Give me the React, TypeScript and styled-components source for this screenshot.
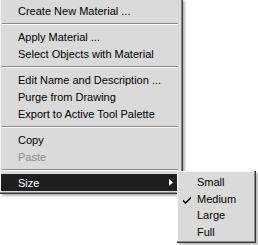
import React from "react";
import styled, { createGlobalStyle } from "styled-components";

const Global = createGlobalStyle`
  html, body { margin: 0; padding: 0; background: #ffffff; }
  body { font-family: "Liberation Sans", Arial, sans-serif; font-size: 11px; }
`;

const Stage = styled.div`
  position: relative;
  width: 258px;
  height: 245px;
  overflow: hidden;
`;

const Menu = styled.div`
  display: flex;
  flex-direction: column;
  width: 183px;
  box-sizing: border-box;
  margin-top: -1px;
  padding: 3px 3px 2px 1px;
  background: #dadada;
  border-right: 1px solid #383838;
  border-bottom: 1px solid #383838;
  box-shadow: inset -1px -1px 0 #8a8a8a, inset 1px 1px 0 #f4f4f4,
    2px 2px 2px rgba(0, 0, 0, 0.28);
`;

const Item = styled.div<{ $disabled?: boolean; $active?: boolean }>`
  position: relative;
  display: flex;
  align-items: center;
  height: 17px;
  padding-left: 17px;
  color: ${(p) => (p.$disabled ? "#8c8c8c" : p.$active ? "#ffffff" : "#000000")};
  background: ${(p) => (p.$active ? "#1e1e1e" : "transparent")};
  white-space: nowrap;
`;

const Separator = styled.div`
  height: 9px;
  display: flex;
  align-items: center;
  padding: 0 1px;
  &::before {
    content: "";
    flex: 1;
    height: 1px;
    border-bottom: 1px solid #fafafa;
    background: #8a8a8a;
  }
`;

const Arrow = styled.svg`
  position: absolute;
  right: 6px;
  top: 5px;
`;

const SubMenu = styled.div`
  position: absolute;
  left: 177px;
  top: 171px;
  width: 79px;
  box-sizing: border-box;
  padding: 3px 2px 2px 2px;
  display: flex;
  flex-direction: column;
  background: #dadada;
  border-right: 1px solid #383838;
  border-bottom: 1px solid #383838;
  box-shadow: inset -1px -1px 0 #8a8a8a, inset 1px 1px 0 #f8f8f8,
    2px 2px 2px rgba(0, 0, 0, 0.28);
`;

const SubItem = styled.div`
  position: relative;
  height: 16.5px;
  display: flex;
  align-items: center;
  padding-left: 18px;
  color: #000;
`;

const Check = styled.svg`
  position: absolute;
  left: 4px;
  top: 5px;
`;

export default function App() {
  return (
    <Stage>
      <Global />
      <Menu>
        <Item>Create New Material ...</Item>
        <Separator />
        <Item>Apply Material ...</Item>
        <Item>Select Objects with Material</Item>
        <Separator />
        <Item>Edit Name and Description ...</Item>
        <Item>Purge from Drawing</Item>
        <Item>Export to Active Tool Palette</Item>
        <Separator />
        <Item>Copy</Item>
        <Item $disabled>Paste</Item>
        <Separator />
        <Item $active>
          Size
          <Arrow width="4" height="7" viewBox="0 0 4 7">
            <path d="M0 0 L4 3.5 L0 7 Z" fill="#ffffff" />
          </Arrow>
        </Item>
      </Menu>
      <SubMenu>
        <SubItem>Small</SubItem>
        <SubItem>
          <Check width="8" height="8" viewBox="0 0 8 8">
            <path d="M0 3.5 L0 5.5 L2.5 8 L8 2.5 L8 0.5 L2.5 6 Z" fill="#000" />
          </Check>
          Medium
        </SubItem>
        <SubItem>Large</SubItem>
        <SubItem>Full</SubItem>
      </SubMenu>
    </Stage>
  );
}
